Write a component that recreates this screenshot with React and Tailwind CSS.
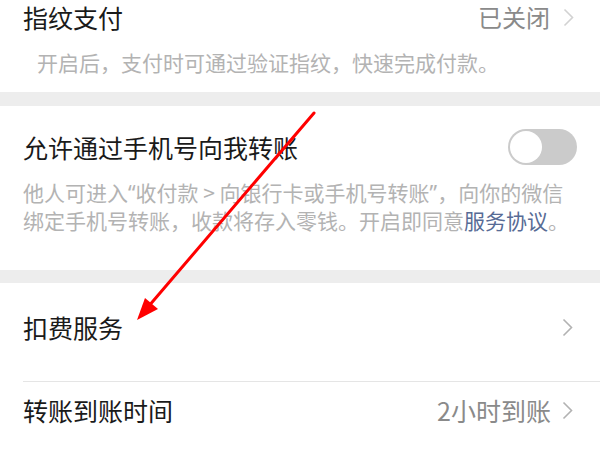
import React from "react";

const font = { fontFamily: '"Noto Sans CJK SC", "Noto Sans", sans-serif' };
const latin = { fontFamily: '"Noto Sans", "Noto Sans CJK SC", sans-serif' };

function Chevron({ color = "#b2b2b2" }) {
  return (
    <svg width="11" height="19" viewBox="0 0 11 19" className="shrink-0">
      <polyline points="1.5,1.5 9.5,9.5 1.5,17.5" fill="none" stroke={color} strokeWidth="1.6" />
    </svg>
  );
}

export default function App() {
  return (
    <div className="relative w-[600px] h-[450px] overflow-hidden bg-[#ededed] text-[#1a1a1a]" style={font}>
      {/* Section 1 */}
      <div className="bg-white h-[92px] pl-[23px] pr-[26px]">
        <div className="flex items-center justify-between h-[34px]">
          <span className="text-[25px] leading-none">指纹支付</span>
          <div className="flex items-center gap-[13px]">
            <span className="text-[24px] leading-none text-[#8a8a8a]">已关闭</span>
            <Chevron color="#d2d2d2" />
          </div>
        </div>
        <div className="mt-[15px] pl-[14px] text-[21px] leading-[27px] text-[#b3b3b3] whitespace-nowrap">
          开启后，支付时可通过验证指纹，快速完成付款。
        </div>
      </div>

      <div className="h-[14px]" />

      {/* Section 2 */}
      <div className="bg-white h-[164px] pl-[23px] pr-[23px] pt-[23px]">
        <div className="flex items-center justify-between h-[36px]">
          <span className="text-[25px] leading-none">允许通过手机号向我转账</span>
          <div className="w-[69px] h-[36px] rounded-full bg-[#cbcbcb] p-[2px] flex items-center">
            <div className="w-[32px] h-[32px] rounded-full bg-white" />
          </div>
        </div>
        <div className="mt-[14px] text-[21px] leading-[27px] text-[#b3b3b3] whitespace-nowrap">
          <div>
            他人可进入<span style={latin}>“</span>收付款 &gt; 向银行卡或手机号转账<span style={latin}>”</span>，向你的微信
          </div>
          <div>
            绑定手机号转账，收款将存入零钱。开启即同意<span className="text-[#576b95]">服务协议</span>。
          </div>
        </div>
      </div>

      <div className="h-[13px]" />

      {/* Section 3 */}
      <div className="bg-white h-[167px]">
        <div className="flex items-center justify-between h-[98px] pl-[23px] pr-[27px] pb-[10px]">
          <span className="text-[25px] leading-none">扣费服务</span>
          <Chevron />
        </div>
        <div className="ml-[23px] h-px bg-[#e5e5e5]" />
        <div className="flex items-center justify-between h-[56px] pl-[23px] pr-[27px]">
          <span className="text-[25px] leading-none">转账到账时间</span>
          <div className="flex items-center gap-[11px]">
            <span className="text-[25px] leading-none text-[#8a8a8a]">2小时到账</span>
            <Chevron />
          </div>
        </div>
      </div>

      {/* Red annotation arrow */}
      <svg className="absolute left-0 top-0 pointer-events-none" width="600" height="450" viewBox="0 0 600 450">
        <line x1="314" y1="113" x2="148" y2="307" stroke="#ff0000" strokeWidth="3" strokeLinecap="round" />
        <polygon points="137,320 158,309 145,298" fill="#ff0000" />
      </svg>
    </div>
  );
}
